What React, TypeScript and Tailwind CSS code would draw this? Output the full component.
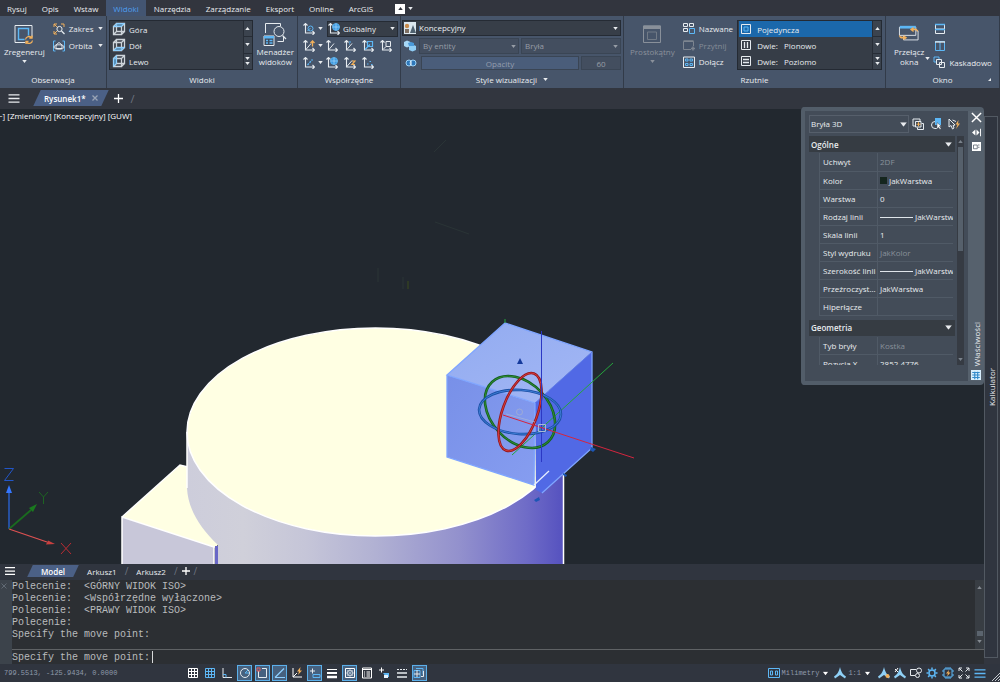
import type { ReactNode } from "react";

const MENU = [
  "Rysuj",
  "Opis",
  "Wstaw",
  "Widoki",
  "Narzędzia",
  "Zarządzanie",
  "Eksport",
  "Online",
  "ArcGIS",
];

const HISTORY = [
  "Polecenie:  <GÓRNY WIDOK ISO>",
  "Polecenie:  <Współrzędne wyłączone>",
  "Polecenie:  <PRAWY WIDOK ISO>",
  "Polecenie:",
  "Specify the move point:",
];

type Prop = { name: string; value: string; muted?: boolean; mark?: "swatch" | "line" };

const GENERAL: Prop[] = [
  { name: "Uchwyt", value: "2DF", muted: true },
  { name: "Kolor", value: "JakWarstwa", mark: "swatch" },
  { name: "Warstwa", value: "0" },
  { name: "Rodzaj linii", value: "JakWarstwa", mark: "line" },
  { name: "Skala linii", value: "1" },
  { name: "Styl wydruku", value: "JakKolor", muted: true },
  { name: "Szerokość linii", value: "JakWarstwa", mark: "line" },
  { name: "Przeźroczyst...", value: "JakWarstwa" },
  { name: "Hiperłącze", value: "" },
];

const GEOMETRY: Prop[] = [
  { name: "Tyb bryły", value: "Kostka", muted: true },
  { name: "Pozycja X", value: "2852.4776" },
];

const BLUE = "#5db7f5";
const LIGHT = "#e6ebef";
const ORANGE = "#f2b05a";

function Caret({ up, className = "" }: { up?: boolean; className?: string }) {
  return (
    <svg viewBox="0 0 6 4" className={`h-[3px] w-[5px] shrink-0 ${className}`} aria-hidden>
      <path d={up ? "M0 4h6L3 0z" : "M0 0h6L3 4z"} fill="currentColor" />
    </svg>
  );
}

function Icon({ size = "h-3 w-3", box = 12, children }: { size?: string; box?: number; children: ReactNode }) {
  return (
    <svg viewBox={`0 0 ${box} ${box}`} className={`shrink-0 ${size}`} fill="none" aria-hidden>
      {children}
    </svg>
  );
}

/* ---------- ribbon icons ---------- */

function CubeIcon({ face }: { face: "top" | "bottom" | "left" }) {
  const fills = {
    top: "M1.5 4.5l3-3h8l-3 3z",
    bottom: "M1.5 12.5l3-3h8l-3 3z",
    left: "M1.5 4.5l3-3v8l-3 3z",
  };
  return (
    <Icon box={14} size="h-[14px] w-[14px]">
      <path
        d="M1.5 4.5h8v8h-8zM4.5 1.5h8v8h-8zM1.5 4.5l3-3M9.5 4.5l3-3M9.5 12.5l3-3M1.5 12.5l3-3"
        stroke="#cdd4da"
        strokeWidth="1.3"
      />
      <path d={fills[face]} fill={BLUE} fillOpacity=".6" stroke="#8fd0ff" />
    </Icon>
  );
}

function AxisIcon({ children, diagonal = true }: { children?: ReactNode; diagonal?: boolean }) {
  return (
    <Icon>
      <path d="M2.5 .5v9.500h9M.5 2.500l2-2 2 2M9.500 8l2 2-2 2" stroke={LIGHT} strokeWidth="1.1" />
      {diagonal && <path d="M2.5 10L8 3.5" stroke={LIGHT} />}
      {children}
    </Icon>
  );
}

function Globe() {
  return (
    <>
      <circle cx="8" cy="4" r="3.5" fill="#3f9be0" stroke={BLUE} strokeWidth=".8" />
      <path d="M4.500 4h7M8 .500v7" stroke="#b7dfff" strokeWidth=".6" />
    </>
  );
}

function ZoomExtents() {
  return (
    <Icon>
      <path d="M1 4V1h3M1 1l3 3M11 4V1H8M1 8v3h3M1 11l3-3" stroke={ORANGE} />
      <circle cx="6.5" cy="6" r="2.6" stroke={LIGHT} />
      <path d="M8.5 8l3 3" stroke={LIGHT} strokeWidth="1.2" />
    </Icon>
  );
}

function OrbitIcon() {
  return (
    <Icon>
      <path d="M2.5 1h-2v10h2M9.5 1h2v10h-2" stroke={BLUE} />
      <path d="M3 8.5V5l3-2.5L9 5v3.5z" stroke={LIGHT} />
      <ellipse cx="6" cy="7" rx="5" ry="2.2" stroke={LIGHT} strokeWidth=".9" />
    </Icon>
  );
}

function RegenIcon() {
  return (
    <Icon box={20} size="h-5 w-5">
      <path d="M1 1.5h17v17H1z" stroke={LIGHT} />
      <path d="M4.5 4.5h10v11h-10z" stroke={BLUE} strokeWidth="1.4" />
      <circle cx="15" cy="16" r="4.5" fill="#47556a" />
      <path
        d="M11.5 15.5a3.5 3.5 0 016.3-1.5M18.5 16.5a3.5 3.5 0 01-6.3 1.5M18 11.5v2.7h-2.7M12 20v-2.5h2.5"
        stroke={ORANGE}
        strokeWidth="1.3"
      />
    </Icon>
  );
}

function ViewManagerIcon() {
  return (
    <Icon box={24} size="h-6 w-6">
      <path d="M2.5 11V1.5h15V4M20.5 15v4.5h-6" stroke={LIGHT} />
      <circle cx="16" cy="9.5" r="5" stroke={LIGHT} />
      <path d="M19.5 13.5L23 17" stroke={LIGHT} strokeWidth="1.3" />
      <path d="M1 14h10v9.5H1z" fill="#3d4a5c" stroke={LIGHT} />
      <path d="M1 14h10v2.5H1z" fill={BLUE} />
      <path d="M3 18.5h2M6.5 18.5h3M3 21h2M6.5 21h3" stroke={BLUE} strokeWidth="1.3" />
    </Icon>
  );
}

function RectViewIcon() {
  return (
    <Icon box={18} size="h-[18px] w-[18px]">
      <path d="M.5 1h17v16.500H.5z" stroke="#89909a" />
      <path d="M.5 .5h17V4H.5z" fill="#89909a" />
      <path d="M4.5 7h9v7.5h-9z" stroke="#717a86" />
    </Icon>
  );
}

function SwitchIcon() {
  return (
    <Icon box={22} size="h-5 w-[22px]">
      <path d="M.5 3.5h18v9H.5zM5 13v4.500h16v-10h-2" stroke={LIGHT} />
      <path d="M1 2h17.500v3H1z" fill={BLUE} />
      <path
        d="M12 6l4-3v2h2a4 4 0 013 4 4 4 0 00-3-2h-2v2zM9 15l-4 3v-2H4a4 4 0 01-4-4 5 5 0 004 2h1v-2z"
        fill={ORANGE}
      />
    </Icon>
  );
}

/* ---------- ribbon building blocks ---------- */

function Panel({ title, width, children, caret, corner }: {
  title: string;
  width: string;
  children: ReactNode;
  caret?: boolean;
  corner?: boolean;
}) {
  return (
    <section
      aria-label={title}
      className={`relative flex shrink-0 flex-col border-r border-[#323b49] pt-1 ${width}`}
    >
      <div className="flex h-[50px] items-stretch">{children}</div>
      <h2 className="flex flex-1 items-center justify-center gap-1.5">
        {title}
        {caret && <Caret />}
      </h2>
      {corner && (
        <svg viewBox="0 0 3 3" className="absolute right-2 bottom-[7px] h-[3px] w-[3px]" aria-hidden>
          <path d="M3 0v3H0z" fill="#e3e7eb" />
        </svg>
      )}
    </section>
  );
}

function BigButton({ icon, lines, muted, caret = true }: {
  icon: ReactNode;
  lines: string[];
  muted?: boolean;
  caret?: boolean;
}) {
  return (
    <button
      type="button"
      className={`flex shrink-0 flex-col items-center pt-px leading-[10px] ${muted ? "text-[#8b919b]" : ""}`}
    >
      <span className="flex h-[26px] items-center">{icon}</span>
      {lines.map((l) => (
        <span key={l}>{l}</span>
      ))}
      {caret && <Caret className="mt-[3px]" />}
    </button>
  );
}

function SmallButton({ icon, label, caret, muted }: {
  icon: ReactNode;
  label: string;
  caret?: boolean;
  muted?: boolean;
}) {
  return (
    <button
      type="button"
      className={`flex h-[17px] items-center gap-1 ${muted ? "text-[#858c97]" : ""}`}
    >
      {icon}
      <span>{label}</span>
      {caret && <Caret className="ml-auto" />}
    </button>
  );
}

function IconButton({ label, children }: { label: string; children: ReactNode }) {
  return (
    <button type="button" aria-label={label} className="flex h-[17px] w-[18px] shrink-0 items-center justify-center">
      {children}
    </button>
  );
}

function Gallery({ items, selected }: { items: { label: string; icon: ReactNode }[]; selected?: number }) {
  return (
    <div className="flex min-w-0 flex-1 border border-[#242a33] bg-[#363d47]">
      <div className="flex min-w-0 flex-1 flex-col pl-px">
        {items.map((it, i) => (
          <button
            key={it.label}
            type="button"
            className={`flex h-4 items-center gap-[3px] pl-px whitespace-pre ${i === selected ? "bg-[#1b68ab]" : ""}`}
          >
            {it.icon}
            {it.label}
          </button>
        ))}
      </div>
      <div className="flex w-[9px] flex-col border-l border-[#272d36] bg-[#3b434e]">
        <button type="button" aria-label="W górę" className="flex flex-1 items-center justify-center">
          <Caret up />
        </button>
        <button type="button" aria-label="W dół" className="flex flex-1 items-center justify-center border-y border-[#272d36]">
          <Caret />
        </button>
        <button type="button" aria-label="Więcej" className="flex flex-1 flex-col items-center justify-center gap-0.5">
          <Caret />
          <Caret />
        </button>
      </div>
    </div>
  );
}

function Combo({ label, value, icon, muted, className = "" }: {
  label: string;
  value: string;
  icon?: ReactNode;
  muted?: boolean;
  className?: string;
}) {
  return (
    <label
      className={`flex items-center border ${
        muted ? "border-[#3a4554] bg-[#434e5f] text-[#979da6]" : "border-[#252b34] bg-[#373e48]"
      } ${className}`}
    >
      <span className="sr-only">{label}</span>
      {icon}
      <select className="h-full min-w-0 flex-1 appearance-none bg-transparent pl-[3px] leading-[14px] outline-none">
        <option>{value}</option>
      </select>
      <Caret className="mr-0.5" />
    </label>
  );
}

/* ---------- ribbon ---------- */

function Ribbon() {
  return (
    <div className="flex h-[72px] shrink-0 bg-[#47556a]">
      <Panel title="Obserwacja" width="w-[107px]">
        <div className="flex flex-1 gap-2 pr-[3px] pl-1">
          <BigButton icon={<RegenIcon />} lines={["Zregeneruj"]} />
          <div className="flex flex-1 flex-col">
            <SmallButton icon={<ZoomExtents />} label="Zakres" caret />
            <SmallButton icon={<OrbitIcon />} label="Orbita" caret />
          </div>
        </div>
      </Panel>

      <Panel title="Widoki" width="w-[191px]">
        <div className="flex flex-1 gap-1 pr-[3px] pl-0.5">
          <Gallery
            items={[
              { label: "Góra", icon: <CubeIcon face="top" /> },
              { label: "Dół", icon: <CubeIcon face="bottom" /> },
              { label: "Lewo", icon: <CubeIcon face="left" /> },
            ]}
          />
          <BigButton icon={<ViewManagerIcon />} lines={["Menadżer", "widoków"]} caret={false} />
        </div>
      </Panel>

      <Panel title="Współrzędne" width="w-[103px]">
        <div className="flex flex-1 flex-col px-0.5">
          <div className="flex h-[17px] items-center">
            <IconButton label="LUW">
              <AxisIcon diagonal={false}>
                <circle cx="7.5" cy="5.500" r="2.500" stroke={BLUE} />
                <path d="M4.500 8l3-3" stroke={BLUE} />
              </AxisIcon>
            </IconButton>
            <Caret className="mr-1" />
            <Combo
              label="Układ współrzędnych"
              value="Globalny"
              icon={<AxisIcon diagonal={false}><Globe /></AxisIcon>}
              className="h-4 min-w-0 flex-1"
            />
          </div>
          <div className="flex h-[17px] items-center">
            <IconButton label="Początek Z">
              <AxisIcon><path d="M9.500 6.500V1M7.500 3l2-2 2 2" stroke={ORANGE} strokeWidth="1.300" /></AxisIcon>
            </IconButton>
            <Caret />
            <IconButton label="LUW globalny"><AxisIcon /></IconButton>
            <IconButton label="Poprzedni LUW">
              <AxisIcon><path d="M5 2h2M5 4h1" stroke={BLUE} /></AxisIcon>
            </IconButton>
            <IconButton label="Powierzchnia">
              <AxisIcon diagonal={false}><path d="M5.500 1.500h5v5h-5zM3 9.500l5-5" stroke={BLUE} strokeWidth="1.200" /></AxisIcon>
            </IconButton>
            <IconButton label="Obiekt">
              <AxisIcon diagonal={false}><path d="M6 1.500h4.500v5H6zM3 9.500l3-3" stroke={LIGHT} /></AxisIcon>
            </IconButton>
          </div>
          <div className="flex h-[17px] items-center">
            <IconButton label="Trzy punkty">
              <AxisIcon diagonal={false}>
                <path d="M4.500 8l5-5.500" stroke={BLUE} strokeWidth="1.300" strokeDasharray="2 1" />
              </AxisIcon>
            </IconButton>
            <Caret />
            <IconButton label="Widok"><AxisIcon diagonal={false}><Globe /></AxisIcon></IconButton>
            <IconButton label="Obrót Z">
              <AxisIcon><path d="M8 4h3L8 7.500h3" stroke={ORANGE} strokeWidth="1.200" /></AxisIcon>
            </IconButton>
            <IconButton label="Nazwany LUW">
              <AxisIcon diagonal={false}><path d="M5 7h1.500M7.500 4.500H9M9 7.500h1.500" stroke={BLUE} /></AxisIcon>
            </IconButton>
          </div>
        </div>
      </Panel>

      <Panel title="Style wizualizacji" width="w-[223px]" caret>
        <div className="flex min-w-0 flex-1 flex-col gap-0.5 px-px pr-0.5">
          <Combo
            label="Styl wizualny"
            value="Koncepcyjny"
            className="h-4"
            icon={
              <Icon size="ml-px h-3 w-3">
                <path d="M0 0h12v12H0z" fill="#dce8ef" />
                <path d="M6 11l3-8 3 8z" fill="#4e6170" />
                <path d="M1 7h4v4H1z" fill="#7d6f63" />
                <circle cx="3" cy="4" r="2.2" fill="#c88b4c" />
              </Icon>
            }
          />
          <div className="flex h-4 items-stretch gap-0.5">
            <span className="flex w-[15px] items-center justify-center">
              <Icon>
                <path d="M0 2L3 .5 6.500 2v4L3 7.500 0 6z" fill="#a7d8f7" />
                <path d="M5 6l3.500-1.500L12 6v4l-3.500 1.500L5 10z" fill="#8fcdf5" />
                <path d="M4 3l3-1 3 1v3H5z" fill="#4a9ada" />
              </Icon>
            </span>
            <Combo label="Kolor krawędzi" value="By entity" muted className="min-w-0 flex-1" />
            <Combo label="Rodzaj" value="Bryła" muted className="min-w-0 flex-1" />
          </div>
          <div className="flex h-[14px] items-stretch gap-0.5">
            <span className="flex w-[17px] items-center justify-center">
              <Icon>
                <circle cx="4" cy="6" r="3" fill="#2e78bb" stroke="#9fd4f8" />
                <circle cx="8" cy="6" r="3" fill="#2e78bb" stroke="#9fd4f8" />
                <path d="M6 4v4" stroke="#fff" />
              </Icon>
            </span>
            <div className="relative flex flex-1 items-center justify-center border border-[#3a4554] bg-[#4a5d7a] text-[#949eae]">
              <label htmlFor="opacity">Opacity</label>
              <input
                id="opacity"
                type="range"
                defaultValue={60}
                className="absolute inset-0 w-full appearance-none bg-transparent opacity-0"
              />
            </div>
            <input
              aria-label="Opacity"
              defaultValue="60"
              className="w-10 border border-[#3a4554] bg-[#434e5f] text-center text-[#979da6]"
            />
          </div>
        </div>
      </Panel>

      <Panel title="Rzutnie" width="w-[262px]">
        <div className="flex flex-1 gap-2 pr-[3px] pl-1.5">
          <BigButton icon={<RectViewIcon />} lines={["Prostokątny"]} muted />
          <div className="flex flex-col">
            <SmallButton
              icon={
                <Icon>
                  <path d="M.5 1.5h4v3h-4zM6.5 1.5h4v3h-4zM.5 6.500h4v3h-4z" stroke={LIGHT} />
                  <path d="M6.5 6.500h5v5h-5z" stroke={BLUE} />
                </Icon>
              }
              label="Nazwane"
            />
            <SmallButton
              muted
              icon={
                <Icon>
                  <path d="M8 10.500H.5v-8h10V7" stroke="#7d8590" />
                  <path d="M.5 2h10M8 9.500h4M10 7.500v4" stroke="#7d8590" strokeWidth="1.5" />
                </Icon>
              }
              label="Przytnij"
            />
            <SmallButton
              icon={
                <Icon>
                  <path d="M.5 1h11v10.500H.5z" stroke={LIGHT} />
                  <path d="M2.500 3H5v2H2.500zM7 3h2.500v2H7zM2.500 7.500H5v2H2.500zM7 7.500h2.500v2H7z" stroke={BLUE} />
                </Icon>
              }
              label="Dołącz"
            />
          </div>
          <div className="-ml-1 flex min-w-0 flex-1">
            <Gallery
              selected={0}
              items={[
                {
                  label: " Pojedyncza",
                  icon: (
                    <Icon>
                      <path d="M1.5 1.5h9v9h-9z" stroke={LIGHT} />
                      <path d="M4 4h4v4H4z" stroke={BLUE} />
                    </Icon>
                  ),
                },
                {
                  label: " Dwie:   Pionowo",
                  icon: (
                    <Icon>
                      <path d="M1.5 1.5h9v9h-9z" stroke={LIGHT} />
                      <path d="M4.5 3v6M7.500 3v6" stroke={LIGHT} strokeWidth="1.300" />
                    </Icon>
                  ),
                },
                {
                  label: " Dwie:   Poziomo",
                  icon: (
                    <Icon>
                      <path d="M1.5 1.5h9v9h-9z" stroke={LIGHT} />
                      <path d="M3 4.500h6M3 7.500h6" stroke={LIGHT} strokeWidth="1.300" />
                    </Icon>
                  ),
                },
              ]}
            />
          </div>
        </div>
      </Panel>

      <Panel title="Okno" width="min-w-[104px] flex-1" corner>
        <div className="flex flex-1 pl-2">
          <BigButton icon={<SwitchIcon />} lines={["Przełącz", "okna"]} caret={false} />
          <Caret className="mt-[37px] mr-px ml-px" />
          <div className="flex flex-col">
            <IconButton label="Poziomo">
              <Icon>
                <path d="M1.5 1.500h9v9h-9zM1.500 6h9" stroke={LIGHT} />
                <path d="M1 1.500h10M1 6.500h10" stroke={BLUE} strokeWidth="1.5" />
              </Icon>
            </IconButton>
            <IconButton label="Pionowo">
              <Icon>
                <path d="M1.5 1.500h9v9h-9zM6 1.500v9" stroke={BLUE} />
                <path d="M1 2h10" stroke={LIGHT} strokeWidth="1.3" />
              </Icon>
            </IconButton>
            <SmallButton
              icon={
                <Icon size="ml-0.5 h-3 w-3">
                  <path d="M1 1h5v5H1z" stroke={BLUE} />
                  <path d="M3.5 3.500h5v5h-5zM6.500 6.500h5v5h-5z" fill="#47556a" stroke={LIGHT} />
                </Icon>
              }
              label="Kaskadowo"
            />
          </div>
        </div>
      </Panel>
    </div>
  );
}

/* ---------- drawing ---------- */

function Viewport() {
  return (
    <main className="relative min-h-0 flex-1 overflow-hidden bg-[#22282f]">
      <svg
        viewBox="0 109 984 455"
        preserveAspectRatio="xMinYMin slice"
        className="absolute inset-0 h-full w-full"
        role="img"
        aria-label="Model 3D"
      >
        <defs>
          <linearGradient id="side" gradientUnits="userSpaceOnUse" x1="187" y1="0" x2="564" y2="0">
            <stop offset="0" stopColor="#cdcddb" />
            <stop offset=".15" stopColor="#d0d0da" />
            <stop offset=".32" stopColor="#c5c5d8" />
            <stop offset=".5" stopColor="#b1b1d3" />
            <stop offset=".72" stopColor="#9391cd" />
            <stop offset=".9" stopColor="#6f6cc7" />
            <stop offset="1" stopColor="#5551bf" />
          </linearGradient>
          <linearGradient id="cubeTop" x1="0" y1="0" x2="1" y2="1">
            <stop offset="0" stopColor="#92abf0" />
            <stop offset="1" stopColor="#a3b7f5" />
          </linearGradient>
          <linearGradient id="cubeFront" x1="0" y1="0" x2="1" y2="1">
            <stop offset="0" stopColor="#7890e8" />
            <stop offset="1" stopColor="#869df0" />
          </linearGradient>
        </defs>

        <path d="M434 152l12-12M435 222l34 12M378 268v14M403 277v12" stroke="#2a3436" />
        <path d="M408 281v8" stroke="#3a4a1c" />

        {/* base box and cylinder */}
        <path d="M122 517l58-52 30 8 8 72-4 3z" fill="#ffffe3" />
        <path d="M122 517l92 30v18h-92z" fill="#c8c7d9" />
        <path d="M122 565v-48l92 30v18M122 517l58-52 8 2" stroke="#fff" strokeWidth="1.5" fill="none" />
        <path d="M187 432v56c1 21 13 40 31 57v20h346V432z" fill="url(#side)" />
        <path d="M215 546h3v19h-3z" fill="#6967c6" />
        <ellipse cx="375.5" cy="432" rx="188.5" ry="104" fill="#ffffe3" stroke="#fff" strokeWidth="1.5" />
        <path d="M187 432v56M563.5 432v133" stroke="#fff" strokeWidth="1.5" />

        {/* selected cube */}
        <path d="M535 403l57-51v96l-50 45-6-3z" fill="#5169e5" />
        <path d="M447 375l88 28-1 82-87-28z" fill="url(#cubeFront)" />
        <path d="M447 375l58-52 87 29-57 51z" fill="url(#cubeTop)" />
        <path
          d="M535 403l-88-28 58-52 87 29v96l-50 45M447 375v82l87 28 1-82"
          stroke="#7fa5ff"
          strokeWidth="1.3"
          fill="none"
        />
        <path d="M534 485l15-14" stroke="#e6eeff" strokeWidth="1.3" />
        <path d="M535 403l57-51" stroke="#5f7dee" />
        <path d="M517 364l3-6 3 6z" fill="#153a9c" />
        <path d="M534 500l5-3 1 3-4 2zM563 473l4 2-1 2-3-2zM591 447l5 2-3 3-3-2z" fill="#1c56b5" />

        {/* gizmo */}
        <g fill="none">
          <path d="M505 319v4M512 455l101-92" stroke="#25a53c" />
          <ellipse cx="520" cy="412" rx="41" ry="29" transform="rotate(47 520 412)" stroke="#155f1f" strokeWidth="2.6" />
          <ellipse cx="520" cy="412" rx="41" ry="29" transform="rotate(47 520 412)" stroke="#2f8f35" strokeWidth=".9" />
          <ellipse cx="520" cy="412" rx="41" ry="22" transform="rotate(4 520 412)" stroke="#1b4fa3" strokeWidth="2.6" />
          <ellipse cx="520" cy="412" rx="41" ry="22" transform="rotate(4 520 412)" stroke="#3f80d8" strokeWidth=".9" />
          <ellipse cx="520" cy="412" rx="41" ry="17.4" transform="rotate(-70 520 412)" stroke="#94171c" strokeWidth="2.6" />
          <ellipse cx="520" cy="412" rx="41" ry="17.4" transform="rotate(-70 520 412)" stroke="#d43a3c" strokeWidth=".9" />
          <path d="M541.5 331v131" stroke="#2b38c4" />
          <path d="M503 415l131 43" stroke="#d3263f" />
          <path d="M506 414l29 8" stroke="#a8b6d9" strokeWidth=".7" />
          <circle cx="519.5" cy="412" r="3" stroke="#a3aed0" strokeWidth=".8" />
          <path d="M538.5 424.5h7v7h-7z" stroke="#aab8d8" />
        </g>

        {/* coordinate system mark */}
        <g fill="none">
          <path d="M9 529v-36" stroke="#2a66dd" strokeWidth="1.3" />
          <path d="M9 485l3 8H6z" fill="#3577ff" />
          <path d="M9 529l22-19" stroke="#1a6b1f" strokeWidth="1.8" />
          <path d="M37 504l-4 8-4-4z" fill="#1a7a1f" />
          <path d="M9 529l38 13" stroke="#dd5151" strokeWidth="1.3" />
          <path d="M55 544l-9 .5 2-4z" fill="#c9403f" />
          <path d="M4.500 468.500h9l-9 12h9" stroke="#2256c8" />
          <path d="M39 492l4.500 5 4.500-5M43.500 497v7" stroke="#1d6422" />
          <path d="M61 543l10 11M71 543l-10 11" stroke="#b92c33" />
        </g>
      </svg>
      <p className="absolute top-px -left-0.5 text-[8px] leading-3 text-white">
        −] [Zmieniony] [Koncepcyjny] [GUW]
      </p>
    </main>
  );
}

/* ---------- properties palette ---------- */

function PropSection({ title, rows }: { title: string; rows: Prop[] }) {
  return (
    <>
      <button
        type="button"
        className="flex h-4 w-full items-center justify-between bg-[#363c43] px-0.5 font-semibold"
      >
        {title}
        <Caret className="mr-0.5 scale-150" />
      </button>
      <table className="mt-px mb-1 ml-2.5 w-[134px] table-fixed border-collapse">
        <tbody>
          {rows.map((r) => (
            <tr key={r.name} className="h-[18px] border-b border-[#505a66]">
              <th
                scope="row"
                className="w-[58px] border-x border-[#505a66] pl-[3px] text-left font-normal whitespace-nowrap"
              >
                {r.name}
              </th>
              <td className={`overflow-hidden pl-0.5 whitespace-nowrap ${r.muted ? "text-[#89919a]" : ""}`}>
                {r.mark === "swatch" && <span className="mr-0.5 inline-block h-[7px] w-[7px] bg-[#15261e]" />}
                {r.mark === "line" && <span className="mr-0.5 inline-block h-px w-[33px] bg-[#dfe5ea] align-middle" />}
                {r.value}
              </td>
            </tr>
          ))}
        </tbody>
      </table>
    </>
  );
}

function Properties() {
  return (
    <aside
      aria-label="Właściwości"
      className="absolute top-[107px] right-4 flex h-[278px] w-[183px] overflow-hidden rounded border-4 border-r-0 border-[#525d69] bg-[#434c58]"
    >
      <div className="flex min-w-0 flex-1 flex-col pt-1 pb-4 pl-1">
        <div className="flex items-center">
          <label className="flex h-[18px] w-[100px] items-center border border-[#565f6b]">
            <span className="sr-only">Typ obiektu</span>
            <select className="h-full min-w-0 flex-1 appearance-none bg-transparent pl-px leading-4 outline-none">
              <option>Bryła 3D</option>
            </select>
            <Caret className="mr-0.5 scale-150" />
          </label>
          <IconButton label="Przełącz PICKADD">
            <Icon>
              <path d="M3.5 8H1V1h7v2.500M3.500 3.500H9V9H3.500zM9.500 5.500h2v6h-6v-2" stroke={LIGHT} />
              <path d="M4.5 6.200h4M6.500 4.200v4" stroke={ORANGE} />
            </Icon>
          </IconButton>
          <IconButton label="Wybierz obiekty">
            <Icon>
              <path d="M5 0h6v7H5z" fill={BLUE} />
              <path d="M5 3.500a3.500 3.500 0 000 7h2" stroke={LIGHT} />
              <path d="M7 4.500V11l1.500-1.500 1.500 2 1-1-1.500-2h2z" fill="#fff" stroke="#434c58" strokeWidth=".5" />
            </Icon>
          </IconButton>
          <IconButton label="Szybki wybór">
            <Icon>
              <path d="M1 1v8l2-1.500L4.500 11 6 10 5 7.500l2-.5zM4.500 2L8 3.500" stroke={LIGHT} />
              <path d="M10.5 2l-3 4.500h2L8 11l4-5.500h-2z" fill={ORANGE} />
            </Icon>
          </IconButton>
        </div>
        <div className="mt-[3px] flex min-h-0 flex-1">
          <div className="min-w-0 flex-1 overflow-hidden">
            <PropSection title="Ogólne" rows={GENERAL} />
            <PropSection title="Geometria" rows={GEOMETRY} />
          </div>
          <div className="mr-1 ml-0.5 flex w-[7px] flex-col items-center justify-between bg-[#363b43] py-1 text-[#7b838c]">
            <Caret up />
            <span className="mt-1 h-[104px] w-[5px] bg-[#56606b]" />
            <span className="flex-1" />
            <Caret />
          </div>
        </div>
      </div>
      <div className="flex w-4 flex-col items-center bg-[#56616d]">
        <button type="button" aria-label="Zamknij" className="h-3">
          <Icon size="h-[11px] w-[11px]">
            <path d="M1 1l10 10M11 1L1 11" stroke="#fff" strokeWidth="1.6" />
          </Icon>
        </button>
        <button type="button" aria-label="Autoukrywanie" className="mt-1 h-2.5">
          <Icon size="h-[9px] w-[9px]">
            <path d="M4.500 2v8L0 6zM6 2v8l4-4z" fill="#fff" />
            <path d="M11.400 1v10" stroke="#fff" strokeWidth="1.300" />
          </Icon>
        </button>
        <button type="button" aria-label="Menu palety" className="mt-1 h-2.5">
          <Icon size="h-[9px] w-[9px]">
            <path d="M0 0h12v12H0z" fill="#fff" />
            <path d="M2 4h5v5H2zM8 4h2M8 7h2" stroke="#4d5864" />
          </Icon>
        </button>
        <span className="mt-auto rotate-180 [writing-mode:vertical-rl]">Właściwości</span>
        <span className="mt-[3px]">
          <Icon size="h-3 w-[10px]">
            <path d="M0 0h12v12H0z" fill="#d9eefc" />
            <path d="M1.5 3h9M1.500 6h9M1.500 9h9M4.500 2v9M8 2v9" stroke="#348bcb" strokeWidth="1.4" />
          </Icon>
        </span>
      </div>
    </aside>
  );
}

/* ---------- bottom bars ---------- */

function Burger() {
  return (
    <Icon size="h-[11px] w-3">
      <path d="M0 2h12M0 6h12M0 10h12" stroke="currentColor" strokeWidth="1.4" />
    </Icon>
  );
}

function DocTabs() {
  return (
    <nav aria-label="Rysunki" className="flex h-[21px] shrink-0 items-center bg-[#32363f] pb-px pl-2">
      <button type="button" aria-label="Menu rysunków"><Burger /></button>
      <div className="relative ml-3.5 flex h-4 items-center gap-1.5 px-2.5">
        <span className="absolute inset-x-[3px] inset-y-0 -skew-x-[25deg] bg-[#4b6086]" />
        <a href="#rysunek1" className="relative font-semibold text-white">Rysunek1*</a>
        <button type="button" aria-label="Zamknij rysunek" className="relative text-[#9aa4b5]">
          <Icon size="h-1.5 w-1.5"><path d="M1 1l10 10M11 1L1 11" stroke="currentColor" strokeWidth="2.5" /></Icon>
        </button>
      </div>
      <button type="button" aria-label="Nowy rysunek" className="ml-1.5">
        <Icon size="h-[9px] w-[9px]"><path d="M6 0v12M0 6h12" stroke="#fff" strokeWidth="1.7" /></Icon>
      </button>
      <span className="ml-2 text-[11px] text-[#6d747f]">/</span>
    </nav>
  );
}

function LayoutTabs() {
  return (
    <nav aria-label="Arkusze" className="flex h-4 shrink-0 items-center bg-[#30353f] pb-0.5 pl-[5px]">
      <button type="button" aria-label="Menu arkuszy">
        <Icon size="h-2.5 w-2.5"><path d="M0 2h12M0 6h12M0 10h12" stroke="#fff" strokeWidth="1.500" /></Icon>
      </button>
      <a href="#model" className="relative ml-3 flex h-3 items-center px-3.5 font-semibold text-white">
        <span className="absolute inset-x-[3px] inset-y-0 -skew-x-[25deg] bg-[#4b6086]" />
        <span className="relative">Model</span>
      </a>
      <a href="#arkusz1" className="ml-2">Arkusz1</a>
      <span className="mx-2 text-[10px] text-[#6d747f]">/</span>
      <a href="#arkusz2">Arkusz2</a>
      <span className="ml-2 text-[10px] text-[#6d747f]">/</span>
      <button type="button" aria-label="Nowy arkusz" className="mx-1">
        <Icon size="h-2 w-2"><path d="M6 0v12M0 6h12" stroke="#fff" strokeWidth="2" /></Icon>
      </button>
      <span className="text-[10px] text-[#6d747f]">/</span>
    </nav>
  );
}

function CommandLine() {
  return (
    <section
      aria-label="Wiersz poleceń"
      className="flex h-[84px] shrink-0 bg-[#2c2f33] font-['Liberation_Mono',monospace] text-[10px] text-[#b9bbbd]"
    >
      <div className="w-3 shrink-0 bg-[#3c434b] pt-[3px] pl-px">
        <Icon size="h-1.5 w-1.5"><path d="M1 1l10 10M11 1L1 11" stroke="#606973" strokeWidth="2" /></Icon>
      </div>
      <div className="flex min-w-0 flex-1 flex-col">
        <div className="flex min-h-0 flex-1 border-b border-[#5f6265]">
          <div className="flex-1 pt-px whitespace-pre">
            {HISTORY.map((line, i) => (
              <div key={i} className="leading-3">{line}</div>
            ))}
          </div>
          <div className="flex w-[9px] flex-col items-center justify-between bg-[#383d43] py-1.5 text-[#858b92]">
            <Caret up />
            <span className="flex-1" />
            <span className="mb-1 h-[5px] w-1.5 bg-[#5b646e]" />
            <Caret />
          </div>
        </div>
        <label className="flex h-[14px] items-center whitespace-pre">
          Specify the move point:
          <span className="ml-0.5 h-3 w-px bg-[#d7d9da]" />
          <input className="flex-1 bg-transparent outline-none" />
        </label>
      </div>
    </section>
  );
}

const GRID = "M1.5 1.5h9v9h-9zM4.5 1v10M7.5 1v10M1 4.5h10M1 7.5h10";

const TOGGLES: { label: string; on?: boolean; art: ReactNode }[] = [
  { label: "Skok", art: <path d={GRID} stroke="#fff" /> },
  { label: "Siatka", art: <path d={GRID} stroke={BLUE} /> },
  {
    label: "Orto",
    art: (
      <>
        <path d="M2 1v9.500h9" stroke={LIGHT} />
        <path d="M2 7.500h3v3" stroke={BLUE} />
      </>
    ),
  },
  {
    label: "Biegunowe",
    on: true,
    art: (
      <>
        <circle cx="6" cy="6" r="4.5" stroke={LIGHT} />
        <path d="M6 6h4M6 6l3-3" stroke={BLUE} />
      </>
    ),
  },
  {
    label: "Przyciąganie",
    on: true,
    art: (
      <>
        <path d="M2.5 4v6.500h8v-9H6" stroke={LIGHT} />
        <path d="M1 1h3v3H1z" stroke="#e05a5a" />
      </>
    ),
  },
  { label: "Śledzenie", on: true, art: <path d="M1 10.5l9-9M1 10.5h10" stroke="#8fd0ff" strokeWidth="1.2" /> },
  {
    label: "Dynamiczny LUW",
    art: (
      <>
        <path d="M2 1v9h9M2 10l4-4" stroke="#fff" />
        <path d="M9.5 0L6 4.500h2L7 8l4-4.500H9z" fill={ORANGE} />
      </>
    ),
  },
  {
    label: "Dynamiczne dane",
    on: true,
    art: (
      <>
        <path d="M1 4h5M3.500 1.500v5" stroke={LIGHT} />
        <path d="M4 7.500h7v3H4z" stroke={BLUE} />
      </>
    ),
  },
  {
    label: "Szerokość linii",
    art: (
      <>
        <path d="M1 2.500h10" stroke="#fff" />
        <path d="M1 6h10" stroke="#fff" strokeWidth="2" />
        <path d="M1 10h10" stroke="#fff" strokeWidth="2.500" />
      </>
    ),
  },
  {
    label: "Przezroczystość",
    on: true,
    art: (
      <>
        <path d="M1.5 1.500h9v9h-9z" stroke="#fff" />
        <path d="M3 3l6 6M9 3L3 9M6 2v8M2 6h8" stroke="#9fb0c2" strokeWidth=".8" />
        <circle cx="6" cy="6" r="2.800" stroke={LIGHT} strokeWidth=".8" />
      </>
    ),
  },
  {
    label: "Właściwości",
    art: <path d="M1.5 1h9v10h-9zM1.500 2.500h9M3 5h1M5.500 5H9M3 7h1M5.500 7H9M3 9h1M5.500 9H9" stroke="#fff" />,
  },
  {
    label: "Cykl wyboru",
    art: (
      <>
        <path d="M1 3h5M3.500 .5v5" stroke="#fff" />
        <path d="M5 6h6v4H8z" fill={BLUE} />
        <path d="M6 8h4v3H6z" fill="#e7f4fd" />
      </>
    ),
  },
  {
    label: "Rodzaj linii",
    art: (
      <>
        <path d="M1 2.500h10" stroke={LIGHT} strokeDasharray="2 1" />
        <path d="M1 6h10M1 10h10" stroke={LIGHT} strokeWidth="1.3" />
      </>
    ),
  },
  {
    label: "Monitor",
    on: true,
    art: (
      <>
        <path d="M1 3.500h6v7H1zM3 1.500h7v6" stroke={BLUE} />
        <path d="M1 7h6M4 3v7M8 9.500h2.500V4" stroke={LIGHT} />
      </>
    ),
  },
];

function ScaleMark({ children }: { children?: ReactNode }) {
  return (
    <Icon>
      <path d="M6 0c1 4 2 7 6 9.500l-1 2L6 8l-5 3.500-1-2C4 7 5 4 6 0z" fill="#8fd0f6" />
      {children}
    </Icon>
  );
}

function StatusBar() {
  return (
    <footer className="flex h-[18px] shrink-0 items-center bg-[#30353f] pl-1 font-['Liberation_Mono',monospace] text-[7px] text-[#8f9aab]">
      <span className="w-[181px] shrink-0">799.5513, -125.9434, 0.0000</span>
      <div className="flex w-[242px] shrink-0 justify-between">
        {TOGGLES.map((t) => (
          <button
            key={t.label}
            type="button"
            aria-label={t.label}
            aria-pressed={!!t.on}
            className={`flex h-4 w-[15px] items-center justify-center border ${
              t.on ? "border-[#5bb0ea] bg-[#46617f]" : "border-transparent"
            }`}
          >
            <Icon>{t.art}</Icon>
          </button>
        ))}
      </div>
      <div className="relative ml-auto flex items-center gap-1 pr-3.5 text-white">
        <button type="button" className="flex items-center gap-0.5 text-[#8f9aab]">
          <Icon>
            <path d="M.5 1.500h11v9H.5z" stroke={BLUE} />
            <path d="M2.500 4h2v4h-2zM7.500 4h2v4h-2z" stroke={BLUE} />
          </Icon>
          Milimetry
          <Caret className="ml-0.5 scale-125 text-white" />
        </button>
        <button type="button" className="ml-0.5 flex items-center gap-0.5 text-[#8f9aab]">
          <ScaleMark />
          1:1
          <Caret className="ml-0.5 scale-125 text-white" />
        </button>
        <button type="button" aria-label="Widoczność opisu" className="ml-1">
          <ScaleMark><circle cx="9.500" cy="9" r="2" fill={ORANGE} /></ScaleMark>
        </button>
        <button type="button" aria-label="Autoskala">
          <ScaleMark><path d="M1 2l3 3M4 1L1 5" stroke="#fff" /></ScaleMark>
        </button>
        <button type="button" aria-label="Izolacja">
          <Icon>
            <path d="M6 2.500H.5v6H5" stroke={LIGHT} />
            <circle cx="9" cy="3.500" r="2.500" stroke={LIGHT} />
            <circle cx="7.500" cy="8.500" r="2" stroke={LIGHT} />
          </Icon>
        </button>
        <button type="button" aria-label="Ustawienia">
          <Icon>
            <circle cx="6" cy="6" r="3" stroke={BLUE} strokeWidth="1.5" />
            <path
              d="M6 .5v2M6 9.500v2M.5 6h2M9.500 6h2M2.100 2.100l1.400 1.400M8.500 8.500l1.400 1.400M2.100 9.900l1.400-1.400M8.500 3.500l1.400-1.400"
              stroke={BLUE}
              strokeWidth="1.5"
            />
          </Icon>
        </button>
        <button type="button" aria-label="Sprzęt">
          <Icon>
            <path d="M2 2h8v8H2zM4 0v2M6 0v2M8 0v2M4 10v2M6 10v2M8 10v2M0 4h2M0 8h2M10 4h2M10 8h2" stroke={BLUE} />
            <path d="M7 3L4 6.500h2l-1 3 3.500-4h-2z" fill={ORANGE} />
          </Icon>
        </button>
        <button type="button" aria-label="Czysty ekran">
          <Icon>
            <path
              d="M1 4V1h3M8 1h3v3M11 8v3H8M4 11H1V8M1 1l3.500 3.500M11 1L7.500 4.500M11 11L7.500 7.500M1 11l3.500-3.500"
              stroke={LIGHT}
            />
          </Icon>
        </button>
        <button type="button" aria-label="Dostosuj" className="text-[#5db7f5]"><Burger /></button>
        <svg viewBox="0 0 8 8" className="absolute right-0 -bottom-0.5 h-2 w-2" aria-hidden>
          <path d="M0 8l8-8M3 8l5-5M6 8l2-2" stroke="#c5cad0" />
        </svg>
      </div>
    </footer>
  );
}

export default function App() {
  return (
    <div className="relative flex h-screen flex-col overflow-hidden bg-[#32363f] font-['Open_Sans',sans-serif] text-[8px] leading-[11px] text-[#e9ecef]">
      <nav aria-label="Menu" className="flex h-4 shrink-0 items-center gap-px bg-[#32353e]">
        {MENU.map((m) => (
          <a
            key={m}
            href={`#${m}`}
            className={`flex h-full items-center px-[7px] pt-px ${m === "Widoki" ? "bg-[#435572] text-[#4e9ff0]" : ""}`}
          >
            {m}
          </a>
        ))}
        <button
          type="button"
          aria-label="Zwiń wstążkę"
          className="mt-px ml-3.5 flex h-2.5 w-2.5 items-center justify-center bg-white text-[#30343c]"
        >
          <Caret up />
        </button>
        <Caret className="ml-0.5" />
      </nav>

      <Ribbon />
      <DocTabs />

      <div className="flex min-h-0 flex-1">
        <div className="flex min-w-0 flex-1 flex-col">
          <Viewport />
          <LayoutTabs />
          <CommandLine />
        </div>
        <div className="flex w-4 shrink-0 pt-[7px] pb-1.5">
          <button
            type="button"
            className="mr-0.5 flex flex-1 items-center justify-center border border-[#525962] bg-[#30353f] text-[#e8ebee]"
          >
            <span className="rotate-180 [writing-mode:vertical-rl]">Kalkulator</span>
          </button>
        </div>
      </div>

      <StatusBar />
      <Properties />
    </div>
  );
}
